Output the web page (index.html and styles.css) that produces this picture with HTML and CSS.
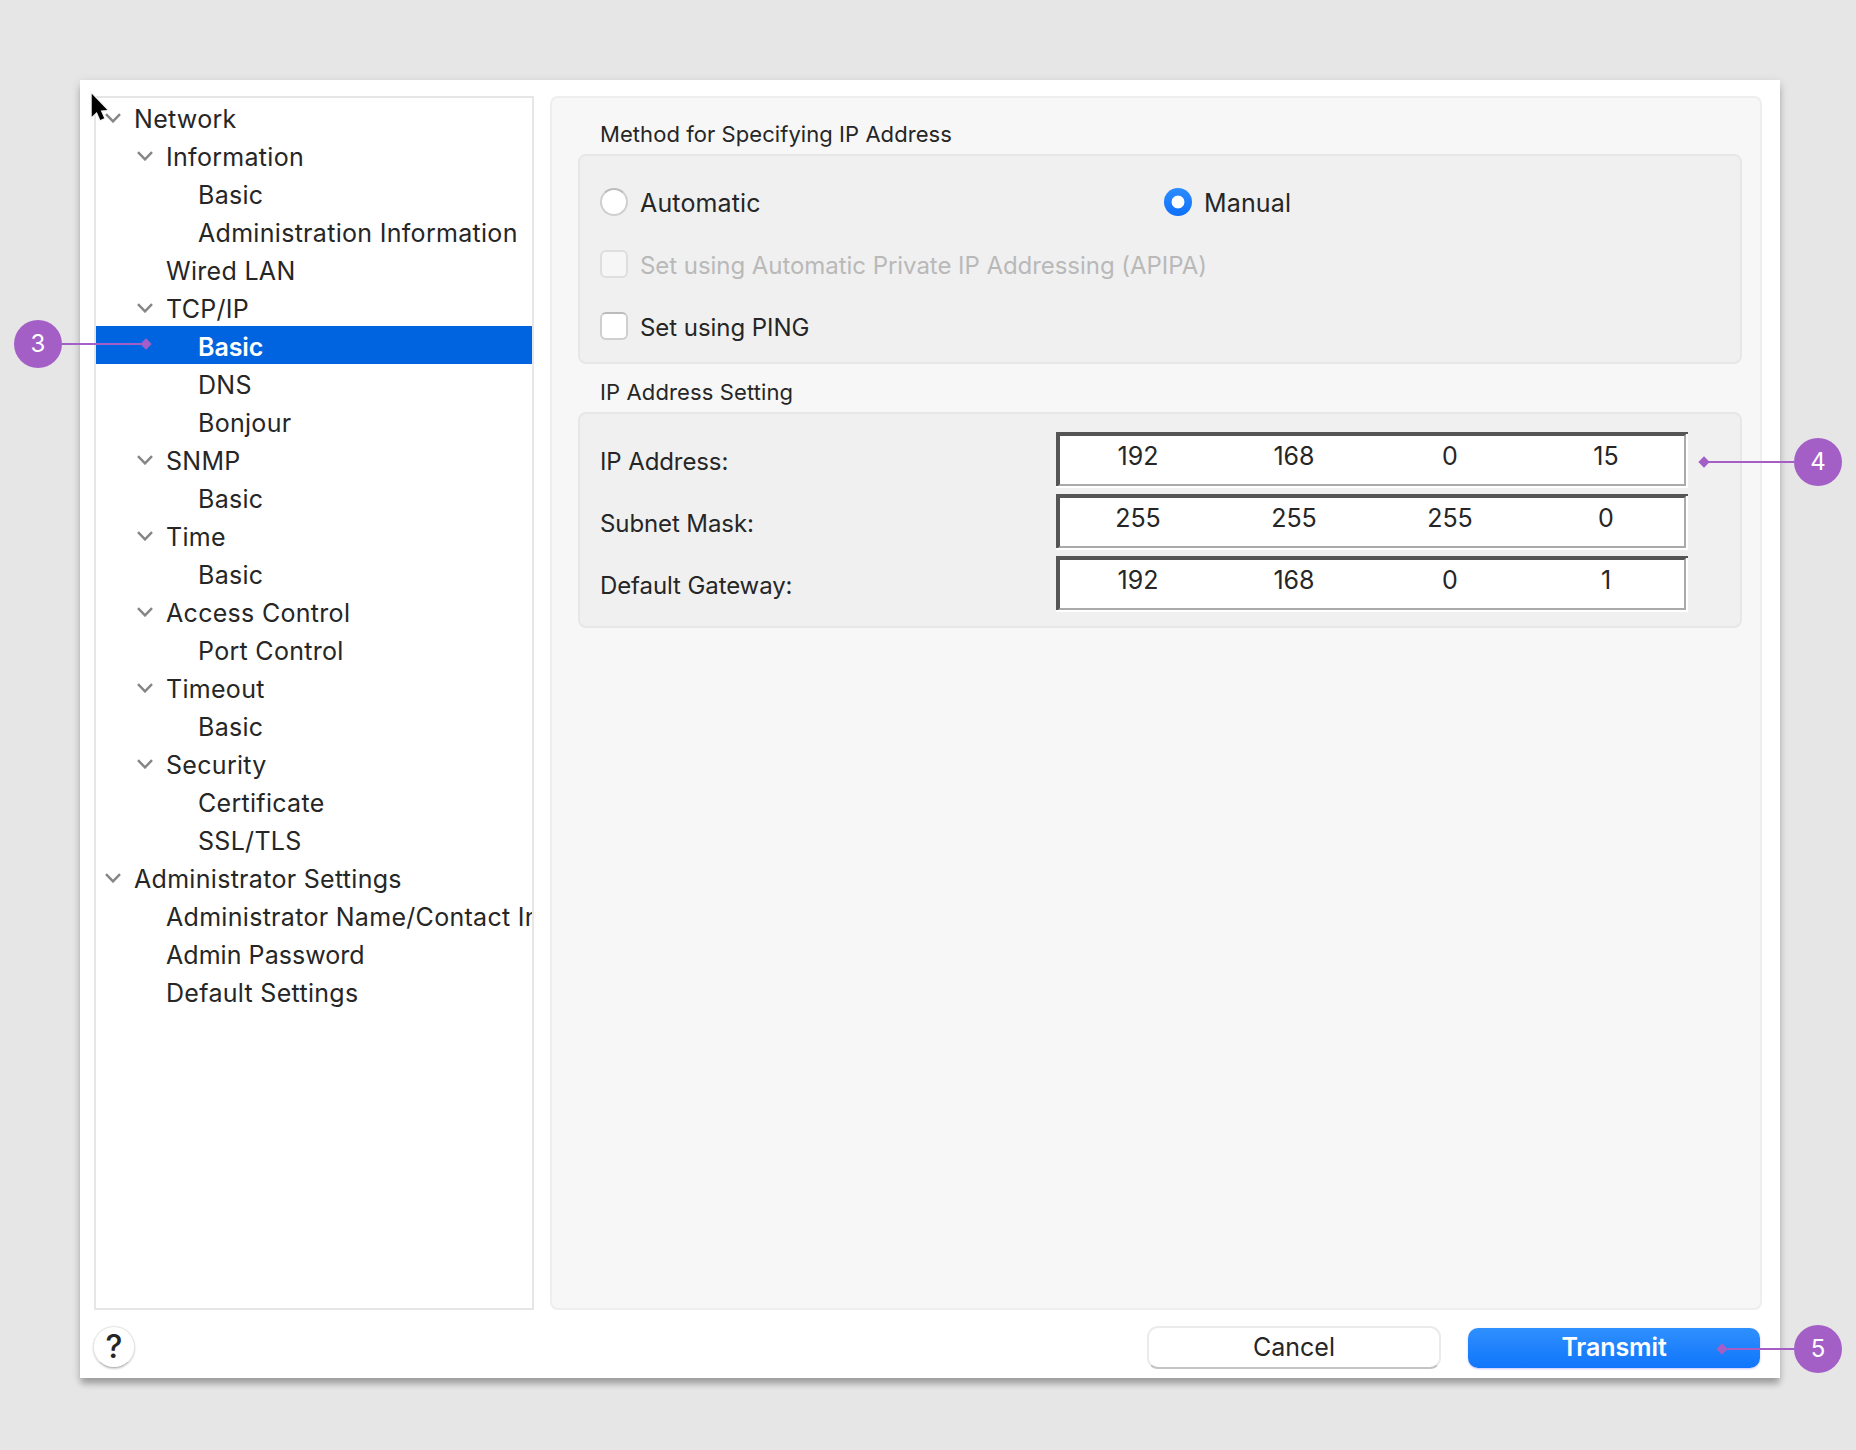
FILE: index.html
```html
<!DOCTYPE html>
<html lang="en">
<head>
    <meta charset="UTF-8">
    <meta name="viewport" content="width=device-width, initial-scale=1.0">
    <title>Network Settings</title>
    <link rel="stylesheet" href="styles.css">
</head>
<body>
    <!-- Shared shapes -->
    <svg class="defs" width="0" height="0">
        <symbol id="chevron" viewBox="0 0 16 10">
            <path d="M1 1.2 L8 8.4 L15 1.2" fill="none" stroke="#858585" stroke-width="2.4"/>
        </symbol>
    </svg>

    <div class="dialog">
        <div class="main">
            <ul class="tree">
                <li class="level-1"><svg class="chevron"><use href="#chevron"/></svg>Network</li>
                <li class="level-2"><svg class="chevron"><use href="#chevron"/></svg>Information</li>
                <li class="level-3">Basic</li>
                <li class="level-3">Administration Information</li>
                <li class="level-2 leaf">Wired LAN</li>
                <li class="level-2"><svg class="chevron"><use href="#chevron"/></svg>TCP/IP</li>
                <li class="level-3 selected">Basic</li>
                <li class="level-3">DNS</li>
                <li class="level-3">Bonjour</li>
                <li class="level-2"><svg class="chevron"><use href="#chevron"/></svg>SNMP</li>
                <li class="level-3">Basic</li>
                <li class="level-2"><svg class="chevron"><use href="#chevron"/></svg>Time</li>
                <li class="level-3">Basic</li>
                <li class="level-2"><svg class="chevron"><use href="#chevron"/></svg>Access Control</li>
                <li class="level-3">Port Control</li>
                <li class="level-2"><svg class="chevron"><use href="#chevron"/></svg>Timeout</li>
                <li class="level-3">Basic</li>
                <li class="level-2"><svg class="chevron"><use href="#chevron"/></svg>Security</li>
                <li class="level-3">Certificate</li>
                <li class="level-3">SSL/TLS</li>
                <li class="level-1"><svg class="chevron"><use href="#chevron"/></svg>Administrator Settings</li>
                <li class="level-2 leaf">Administrator Name/Contact Information</li>
                <li class="level-2 leaf tight">Admin Password</li>
                <li class="level-2 leaf">Default Settings</li>
            </ul>

            <div class="panel">
                <h3>Method for Specifying IP Address</h3>
                <div class="group method">
                    <div class="option-row">
                        <label class="option"><span class="radio"></span><span class="text">Automatic</span></label>
                        <label class="option"><span class="radio checked"></span><span class="text">Manual</span></label>
                    </div>
                    <div class="option-row small">
                        <label class="option disabled"><span class="checkbox"></span><span class="text">Set using Automatic Private IP Addressing (APIPA)</span></label>
                    </div>
                    <div class="option-row small">
                        <label class="option"><span class="checkbox"></span><span class="text">Set using PING</span></label>
                    </div>
                </div>

                <h3>IP Address Setting</h3>
                <div class="group address">
                    <div class="address-row">
                        <span class="name">IP Address:</span>
                        <div class="field"><div class="octets"><span>192</span><span>168</span><span>0</span><span>15</span></div></div>
                    </div>
                    <div class="address-row">
                        <span class="name">Subnet Mask:</span>
                        <div class="field"><div class="octets"><span>255</span><span>255</span><span>255</span><span>0</span></div></div>
                    </div>
                    <div class="address-row">
                        <span class="name">Default Gateway:</span>
                        <div class="field"><div class="octets"><span>192</span><span>168</span><span>0</span><span>1</span></div></div>
                    </div>
                </div>
            </div>
        </div>

        <div class="footer">
            <button class="help">?</button>
            <button class="cancel">Cancel</button>
            <button class="transmit">Transmit</button>
        </div>
    </div>

    <svg class="cursor" viewBox="0 0 24 36">
        <path d="M3 3 V28 L8.5 23 L12.3 31.5 L16.6 29.6 L12.8 21.3 L20 20.6 Z" fill="#000" stroke="#f2f2f2" stroke-opacity=".85" stroke-width="3" paint-order="stroke"/>
    </svg>

    <!-- Step callouts -->
    <div class="callout step-3"><span class="number">3</span><span class="line"></span><span class="diamond"></span></div>
    <div class="callout step-4"><span class="number">4</span><span class="line"></span><span class="diamond"></span></div>
    <div class="callout step-5"><span class="number">5</span><span class="line"></span><span class="diamond"></span></div>
</body>
</html>
```
FILE: styles.css
```css
* {
    box-sizing: border-box;
}

body {
    position: relative;
    margin: 0;
    padding: 80px 76px 0 80px;
    height: 1450px;
    overflow: hidden;
    background-color: #e6e6e6;
    color: #262626;
    font-family: Inter, "Liberation Sans", sans-serif;
    font-size: 25px;
}

.defs {
    position: absolute;
}

.dialog {
    height: 1298px;
    padding: 16px 18px 0 14px;
    background-color: #fff;
    box-shadow: 0 7px 6px -1px rgba(0, 0, 0, 0.22), 0 3px 9px rgba(0, 0, 0, 0.16);
}

.main {
    display: flex;
    gap: 16px;
    height: 1214px;
}

/* Sidebar tree */
.tree {
    width: 440px;
    margin: 0;
    padding: 0;
    list-style: none;
    border: 2px solid #e6e6e6;
    overflow: hidden;
}

.tree li {
    display: flex;
    align-items: center;
    height: 38px;
    padding-top: 3px;
    white-space: nowrap;
    letter-spacing: 0.3px;
}

.tree .tight {
    letter-spacing: 0.05px;
}

.tree .level-1 {
    padding-left: 9px;
}

.tree .level-2 {
    padding-left: 41px;
}

.tree .leaf {
    padding-left: 70px;
}

.tree .level-3 {
    padding-left: 102px;
}

.tree .selected {
    background-color: #0064e1;
    color: #fff;
    font-weight: 600;
    letter-spacing: -0.1px;
}

.chevron {
    width: 16px;
    height: 10px;
    margin: 0 13px 1px 0;
}

/* Settings panel */
.panel {
    flex: 1;
    padding: 0 18px 0 26px;
    background-color: #f7f7f7;
    border: 2px solid #eee;
    border-radius: 8px;
}

.panel h3 {
    height: 56px;
    margin: 0;
    padding: 22px 0 0 22px;
    font-size: 22px;
    font-weight: 400;
    line-height: 28px;
    letter-spacing: 0.06px;
}

.panel .group + h3 {
    height: 48px;
    padding-top: 14px;
    letter-spacing: 0.12px;
}

.group {
    border: 2px solid #e7e7e7;
    border-radius: 8px;
    background-color: #f0f0f0;
}

.method {
    height: 210px;
    padding: 32px 0 0 20px;
}

.option-row {
    display: flex;
    height: 62px;
    letter-spacing: 0.15px;
}

.option-row.small {
    font-size: 24px;
    letter-spacing: -0.05px;
}

.option {
    display: flex;
    align-items: center;
    gap: 12px;
    width: 564px;
    height: 28px;
    white-space: nowrap;
}

.option .text {
    padding-top: 2px;
}

.disabled {
    color: #b9b9b9;
}

.radio,
.checkbox {
    flex: none;
    width: 28px;
    height: 28px;
    border: 2px solid #cfcfcf;
    border-top-color: #bcbcbc;
    background-color: #fff;
}

.radio {
    border-radius: 50%;
}

.checkbox {
    border-radius: 6px;
}

.radio.checked {
    border: none;
    background: radial-gradient(circle, #fff 6px, transparent 6.8px), linear-gradient(#2c8dfd, #0f70fb);
}

.disabled .checkbox {
    border-color: #dedede;
    background-color: #f6f6f6;
}

.address {
    height: 216px;
    padding: 18px 52px 0 20px;
}

.address-row {
    display: flex;
    justify-content: space-between;
    height: 62px;
}

.address-row .name {
    font-size: 24px;
    line-height: 59px;
    letter-spacing: -0.1px;
}

/* Sunken field: dark outer edge top/left, grey inner edge bottom/right */
.field {
    width: 632px;
    height: 56px;
    padding: 2px;
    background:
        linear-gradient(#555, #555) top / 100% 2px no-repeat,
        linear-gradient(#555, #555) left top / 2px 54px no-repeat,
        #fff;
}

.octets {
    display: grid;
    grid-template-columns: repeat(4, 1fr);
    height: 100%;
    border: 2px solid;
    border-color: #555 #aaa #aaa #555;
    background-color: #fff;
    font-size: 25px;
    line-height: 41px;
    text-align: center;
}

/* Buttons */
.footer {
    display: flex;
    align-items: center;
    padding-top: 14px;
}

.footer button {
    padding: 0 0 2px;
    font-family: inherit;
    font-size: 25px;
    color: #262626;
    background-color: #fff;
}

.footer .help {
    width: 42px;
    height: 42px;
    margin: 0 auto 0 -1px;
    border: 1px solid #e6e6e6;
    border-bottom-color: #bbb;
    border-radius: 50%;
    font-size: 32px;
    font-weight: 500;
    box-shadow: 0 1px 2px rgba(0, 0, 0, 0.2);
}

.footer .cancel {
    width: 294px;
    height: 43px;
    margin: 2px 27px 0 0;
    border: 2px solid #ebebeb;
    border-bottom-color: #c4c4c4;
    border-radius: 11px;
}

.footer .transmit {
    width: 292px;
    height: 40px;
    margin: 2px 2px 0 0;
    border: none;
    border-radius: 10px;
    background: linear-gradient(#2f90fe, #0f75fb);
    box-shadow: 0 1px 2px rgba(60, 60, 255, 0.3);
    color: #fff;
    font-weight: 600;
    letter-spacing: -0.1px;
}

/* Mouse pointer over the tree corner */
.cursor {
    position: absolute;
    left: 89px;
    top: 91px;
    width: 22px;
    height: 33px;
}

/* Numbered callouts drawn over the dialog */
.callout {
    position: absolute;
    display: flex;
    align-items: center;
    height: 48px;
    color: #fff;
}

.number {
    flex: none;
    width: 48px;
    height: 48px;
    border-radius: 50%;
    background-color: #a35fc6;
    font-size: 24px;
    line-height: 48px;
    text-align: center;
}

.line {
    flex: 1;
    height: 2px;
    background-color: #a35fc6;
}

.diamond {
    width: 8px;
    height: 8px;
    margin: 0 1px 0 -5px;
    background-color: #a35fc6;
    transform: rotate(45deg);
}

.step-3 {
    left: 14px;
    top: 320px;
    width: 137px;
}

.step-4,
.step-5 {
    flex-direction: row-reverse;
    right: 14px;
}

.step-4 .diamond,
.step-5 .diamond {
    margin: 0 -5px 0 1px;
}

.step-4 {
    top: 438px;
    width: 143px;
}

.step-5 {
    top: 1325px;
    width: 125px;
}
```
